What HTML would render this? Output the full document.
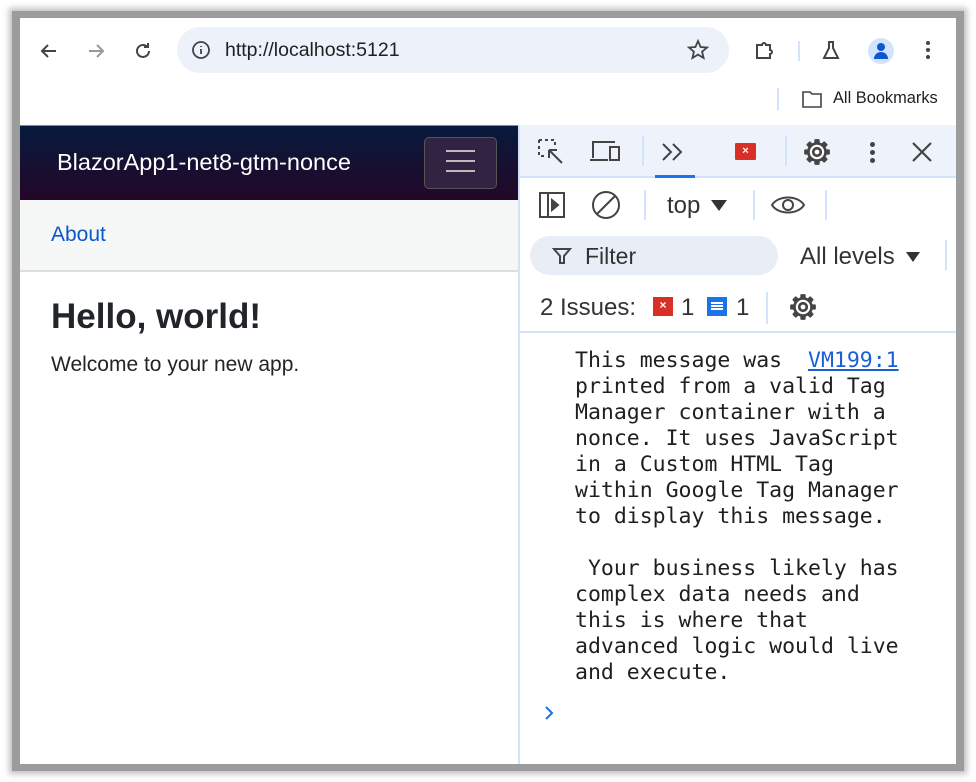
<!DOCTYPE html>
<html><head><meta charset="utf-8"><style>
*{box-sizing:border-box;margin:0;padding:0}
body{width:976px;height:782px;background:#fff;position:relative;overflow:hidden;font-family:"Liberation Sans",sans-serif}
.frame{position:absolute;left:12px;top:11px;width:952px;height:760px;background:#9c9c9c;box-shadow:0 0 6px 3px rgba(0,0,0,.25)}
.win{position:absolute;left:20px;top:18px;width:936px;height:746px;background:#fff;overflow:hidden}
.a{position:absolute}
.mono{font-family:"DejaVu Sans Mono","Liberation Mono",monospace;font-size:21.5px;line-height:26px;color:#1f1f1f;white-space:pre}
.ic{position:absolute;stroke:#444;fill:none;stroke-width:2}
.sep{position:absolute;width:2px;background:#d3e3fd}
</style></head><body>
<svg width="0" height="0" style="position:absolute"><defs>
<g id="gear"><g fill="#444" stroke="none"><rect x="11.5" y="2" width="5" height="5" rx="1"/><rect x="11.5" y="21" width="5" height="5" rx="1"/><rect x="2" y="11.5" width="5" height="5" rx="1"/><rect x="21" y="11.5" width="5" height="5" rx="1"/><g transform="rotate(45 14 14)"><rect x="11.5" y="2" width="5" height="5" rx="1"/><rect x="11.5" y="21" width="5" height="5" rx="1"/><rect x="2" y="11.5" width="5" height="5" rx="1"/><rect x="21" y="11.5" width="5" height="5" rx="1"/></g></g><circle cx="14" cy="14" r="8" fill="#fff" stroke="#444" stroke-width="2.5"/><circle cx="14" cy="14" r="3.5" fill="none" stroke="#444" stroke-width="2.5"/></g>
</defs></svg>
<div class="frame"></div>
<div class="win">
  <svg class="ic" style="left:18px;top:22px" width="22" height="22" viewBox="0 0 22 22"><path d="M18 11H4M10 5l-6 6 6 6"/></svg>
  <svg class="ic" style="left:65px;top:22px;stroke:#999" width="22" height="22" viewBox="0 0 22 22"><path d="M4 11h14M12 5l6 6-6 6"/></svg>
  <svg class="ic" style="left:112px;top:22px" width="22" height="22" viewBox="0 0 22 22"><path d="M17 11a6 6 0 1 1-2-4.5M16 3v4h-4"/></svg>
  <div class="a" style="left:157px;top:9px;width:552px;height:46px;border-radius:23px;background:#edf2fa"></div>
  <svg class="ic" style="left:170px;top:21px;stroke-width:1.8" width="22" height="22" viewBox="0 0 22 22"><circle cx="11" cy="11" r="8"/><path d="M11 10v5M11 7v1"/></svg>
  <div class="a" style="left:205px;top:21px;font-size:19.5px;color:#1f1f1f">http://localhost:5121</div>
  <svg class="ic" style="left:667px;top:21px;stroke-width:1.8" width="22" height="22" viewBox="0 0 22 22"><path d="M11 2l2.6 6 6.4.5-4.9 4.2 1.5 6.3L11 15.6 5.4 19l1.5-6.3L2 8.5 8.4 8z"/></svg>
  <svg class="ic" style="left:733px;top:21px" width="22" height="22" viewBox="0 0 22 22"><path d="M4 6h5a2 2 0 0 1 4 0h4v5a2 2 0 0 1 0 4v4H4z"/></svg>
  <div class="sep" style="left:778px;top:23px;height:20px"></div>
  <svg class="ic" style="left:800px;top:21px" width="22" height="22" viewBox="0 0 22 22"><path d="M8 3h6M9 3v6l-5 10h14l-5-10V3"/></svg>
  <div class="a" style="left:848px;top:20px;width:26px;height:26px;border-radius:13px;background:#d3e3fd"></div>
  <div class="a" style="left:857px;top:25px;width:8px;height:8px;border-radius:4px;background:#0b57d0"></div>
  <div class="a" style="left:854px;top:34px;width:14px;height:7px;border-radius:7px 7px 0 0;background:#0b57d0"></div>
  <div class="a" style="left:906px;top:23px;width:4px;height:4px;border-radius:2px;background:#444;box-shadow:0 7px #444,0 14px #444"></div>
  <div class="sep" style="left:757px;top:70px;height:22px"></div>
  <svg class="ic" style="left:781px;top:71px;stroke-width:1.6" width="22" height="20" viewBox="0 0 22 20"><path d="M2 3h7l2 2h9v13H2z"/></svg>
  <div class="a" style="left:813px;top:71px;font-size:16.4px;color:#1f1f1f">All Bookmarks</div>

  <div class="a" style="left:0;top:107px;width:499px;height:75px;background:linear-gradient(180deg,#061a3d 0%,#250728 100%);border-top:1px solid #888"></div>
  <div class="a" style="left:37px;top:131px;font-size:23.5px;color:#fff">BlazorApp1-net8-gtm-nonce</div>
  <div class="a" style="left:404px;top:119px;width:73px;height:52px;border-radius:5px;background:#322342;border:1px solid #555"></div>
  <div class="a" style="left:426px;top:132px;width:29px;height:2px;background:#bbb;box-shadow:0 10px #bbb,0 20px #bbb"></div>
  <div class="a" style="left:0;top:182px;width:499px;height:72px;background:#f6f7f7;border-bottom:2px solid #dedede"></div>
  <div class="a" style="left:31px;top:205px;font-size:21px;color:#0a58ca">About</div>
  <div class="a" style="left:31px;top:279px;font-size:35px;font-weight:bold;color:#212529">Hello, world!</div>
  <div class="a" style="left:31px;top:335px;font-size:21px;color:#212529">Welcome to your new app.</div>

  <div class="a" style="left:498px;top:107px;width:2px;height:639px;background:#d3e3fd"></div>
  <div class="a" style="left:500px;top:107px;width:436px;height:53px;background:#eef3fb;border-bottom:2px solid #d3e3fd"></div>
  <svg class="ic" style="left:517px;top:120px" width="28" height="28" viewBox="0 0 28 28"><path d="M2 2h16v6M2 2v16h6" stroke-dasharray="3 3"/><path d="M12 12l13 13M12 12h8M12 12v8"/></svg>
  <svg class="ic" style="left:569px;top:120px" width="34" height="28" viewBox="0 0 34 28"><path d="M4 20V4h22M1 22h18"/><rect x="21" y="9" width="9" height="13"/></svg>
  <div class="sep" style="left:622px;top:118px;height:30px"></div>
  <svg class="ic" style="left:640px;top:122px" width="28" height="24" viewBox="0 0 28 24"><path d="M3 4l8 8-8 8M13 4l8 8-8 8"/></svg>
  <div class="a" style="left:635px;top:157px;width:40px;height:3px;background:#1a73e8"></div>
  <div class="a" style="left:715px;top:125px;width:21px;height:17px;background:#d93025;border-radius:1px;color:#fff;font-size:11px;text-align:center;line-height:17px;font-weight:bold">×</div>
  <div class="sep" style="left:765px;top:118px;height:30px"></div>
  <svg class="a" style="left:782px;top:119px" width="30" height="30" viewBox="0 0 28 28"><use href="#gear"/></svg>
  <div class="a" style="left:850px;top:124px;width:5px;height:5px;border-radius:3px;background:#444;box-shadow:0 8px #444,0 16px #444"></div>
  <svg class="ic" style="left:891px;top:123px;stroke-width:2.2" width="22" height="22" viewBox="0 0 22 22"><path d="M2 2l18 18M20 2L2 20"/></svg>

  <svg class="ic" style="left:518px;top:173px" width="28" height="28" viewBox="0 0 28 28"><rect x="2" y="2" width="24" height="24"/><path d="M10 2v24"/><path d="M14 9l6 5-6 5z" fill="#444"/></svg>
  <svg class="ic" style="left:571px;top:172px" width="30" height="30" viewBox="0 0 30 30"><circle cx="15" cy="15" r="13"/><path d="M6 24L24 6"/></svg>
  <div class="sep" style="left:624px;top:172px;height:30px"></div>
  <div class="a" style="left:647px;top:174px;font-size:24px;color:#333">top</div>
  <div class="a" style="left:691px;top:182px;width:0;height:0;border-left:8px solid transparent;border-right:8px solid transparent;border-top:11px solid #333"></div>
  <div class="sep" style="left:733px;top:172px;height:30px"></div>
  <svg class="ic" style="left:750px;top:175px" width="36" height="24" viewBox="0 0 36 24"><path d="M2 12C8 2 28 2 34 12C28 22 8 22 2 12z"/><circle cx="18" cy="12" r="5"/></svg>
  <div class="sep" style="left:805px;top:172px;height:30px"></div>

  <div class="a" style="left:510px;top:218px;width:248px;height:39px;border-radius:20px;background:#e9eef6"></div>
  <svg class="ic" style="left:532px;top:228px" width="20" height="20" viewBox="0 0 20 20"><path d="M2 3h16l-6 7v7h-4v-7z"/></svg>
  <div class="a" style="left:565px;top:225px;font-size:23px;color:#333">Filter</div>
  <div class="a" style="left:780px;top:225px;font-size:24px;color:#333">All levels</div>
  <div class="a" style="left:886px;top:234px;width:0;height:0;border-left:7px solid transparent;border-right:7px solid transparent;border-top:10px solid #333"></div>
  <div class="sep" style="left:925px;top:222px;height:30px"></div>

  <div class="a" style="left:520px;top:276px;font-size:24px;color:#333">2 Issues:</div>
  <div class="a" style="left:633px;top:279px;width:20px;height:19px;background:#d93025;color:#fff;font-size:12px;font-weight:bold;text-align:center;line-height:17px">×</div>
  <div class="a" style="left:661px;top:276px;font-size:24px;color:#333">1</div>
  <div class="a" style="left:687px;top:279px;width:20px;height:19px;background:#1a73e8"></div>
  <div class="a" style="left:691px;top:284px;width:12px;height:2px;background:#fff;box-shadow:0 3px #fff,0 6px #fff"></div>
  <div class="a" style="left:716px;top:276px;font-size:24px;color:#333">1</div>
  <div class="sep" style="left:746px;top:274px;height:32px"></div>
  <svg class="a" style="left:768px;top:274px" width="30" height="30" viewBox="0 0 28 28"><use href="#gear"/></svg>
  <div class="a" style="left:500px;top:313px;width:436px;height:2px;background:#d3e3fd"></div>

  <div class="a mono" style="left:555px;top:330px">This message was  <span style="color:#1a5fd6;text-decoration:underline">VM199:1</span>
printed from a valid Tag
Manager container with a
nonce. It uses JavaScript
in a Custom HTML Tag
within Google Tag Manager
to display this message.

 Your business likely has
complex data needs and
this is where that
advanced logic would live
and execute.</div>
  <svg class="ic" style="left:522px;top:686px;stroke:#1a73e8" width="14" height="18" viewBox="0 0 14 18"><path d="M4 3l6 6-6 6"/></svg>
</div>
</body></html>
